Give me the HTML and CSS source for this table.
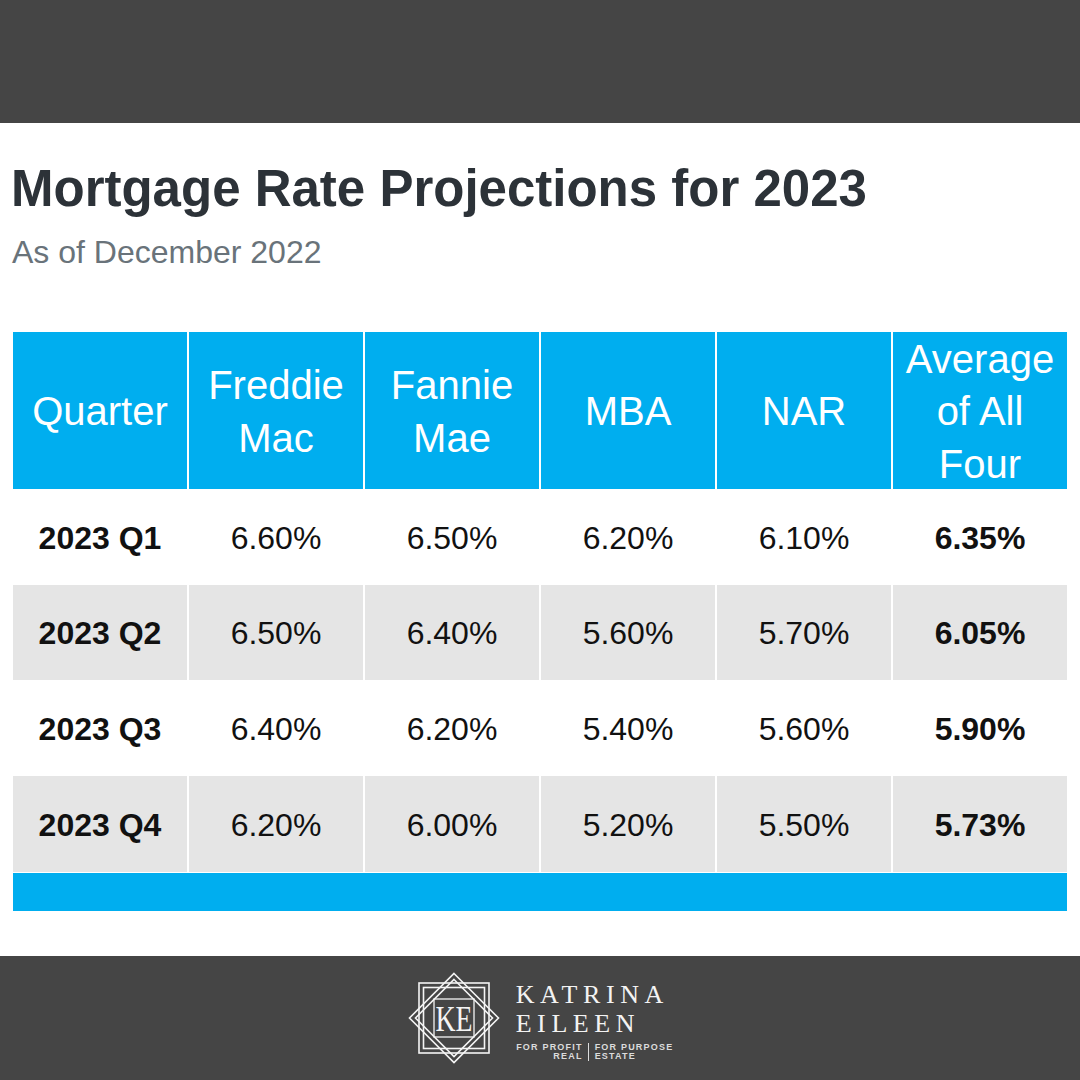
FILE: index.html
```html
<!DOCTYPE html>
<html lang="en">
<head>
<meta charset="utf-8">
<title>Mortgage Rate Projections for 2023</title>
<link rel="stylesheet" href="styles.css">
</head>
<body>
<div class="page">
  <header class="topbar"></header>
  <main class="content">
    <h1 class="title">Mortgage Rate Projections for 2023</h1>
    <p class="subtitle">As of December 2022</p>
    <div class="table">
      <div class="row head">
        <div class="cell">Quarter</div>
        <div class="cell">Freddie<br>Mac</div>
        <div class="cell">Fannie<br>Mae</div>
        <div class="cell">MBA</div>
        <div class="cell">NAR</div>
        <div class="cell">Average<br>of All<br>Four</div>
      </div>
      <div class="row data">
        <div class="cell strong">2023 Q1</div>
        <div class="cell">6.60%</div>
        <div class="cell">6.50%</div>
        <div class="cell">6.20%</div>
        <div class="cell">6.10%</div>
        <div class="cell strong">6.35%</div>
      </div>
      <div class="row data shaded short">
        <div class="cell strong">2023 Q2</div>
        <div class="cell">6.50%</div>
        <div class="cell">6.40%</div>
        <div class="cell">5.60%</div>
        <div class="cell">5.70%</div>
        <div class="cell strong">6.05%</div>
      </div>
      <div class="row data">
        <div class="cell strong">2023 Q3</div>
        <div class="cell">6.40%</div>
        <div class="cell">6.20%</div>
        <div class="cell">5.40%</div>
        <div class="cell">5.60%</div>
        <div class="cell strong">5.90%</div>
      </div>
      <div class="row data shaded">
        <div class="cell strong">2023 Q4</div>
        <div class="cell">6.20%</div>
        <div class="cell">6.00%</div>
        <div class="cell">5.20%</div>
        <div class="cell">5.50%</div>
        <div class="cell strong">5.73%</div>
      </div>
      <div class="table-foot"></div>
    </div>
  </main>
  <footer class="brandbar">
    <div class="brand">
      <svg class="emblem" width="92" height="92" viewBox="0 0 92 92" aria-hidden="true">
        <g fill="none" stroke="#f4f4f4" stroke-width="1.6">
          <polygon points="46,1.5 90.5,46 46,90.5 1.5,46"/>
          <polygon points="46,7.5 84.5,46 46,84.5 7.5,46"/>
          <rect x="11" y="11" width="70" height="70"/>
          <rect x="15.5" y="15.5" width="61" height="61"/>
          <rect x="26" y="27" width="40" height="38" stroke-width="1.3"/>
        </g>
        <text class="emblem-text" x="46" y="58.5" text-anchor="middle" textLength="37" lengthAdjust="spacingAndGlyphs">KE</text>
      </svg>
      <div class="wordmark">
        <div class="name">KATRINA</div>
        <div class="name">EILEEN</div>
        <div class="tagline">
          <div class="tag-left">FOR PROFIT<br>REAL</div>
          <div class="tag-divider"></div>
          <div class="tag-right">FOR PURPOSE<br>ESTATE</div>
        </div>
      </div>
    </div>
  </footer>
</div>
</body>
</html>
```

FILE: styles.css
```css
html, body {
  margin: 0;
  padding: 0;
  background: #ffffff;
}

.page {
  width: 1080px;
  height: 1080px;
  display: flex;
  flex-direction: column;
  font-family: "Liberation Sans", Arial, sans-serif;
}

.topbar {
  height: 123px;
  background: #454545;
  flex: none;
}

.content {
  flex: 1;
  padding: 36px 13px 0 13px;
}

.title {
  margin: 0 0 0 -2px;
  font-size: 51px;
  line-height: 60px;
  font-weight: 700;
  color: #2c3238;
}

.subtitle {
  margin: 14px 0 0 -1px;
  font-size: 32px;
  line-height: 38px;
  color: #69737a;
}

.table {
  margin-top: 61px;
  width: 1054px;
  display: flex;
  flex-direction: column;
}

.row {
  display: grid;
  grid-template-columns: repeat(6, 1fr);
  column-gap: 2px;
}

.cell {
  display: flex;
  align-items: center;
  justify-content: center;
  text-align: center;
}

.head .cell {
  background: #00aeef;
  color: #ffffff;
  font-size: 40px;
  line-height: 52.5px;
  height: 157px;
  padding-top: 2px;
  box-sizing: border-box;
}

.data .cell {
  height: 96px;
  font-size: 32px;
  color: #111111;
  padding-top: 2px;
  box-sizing: border-box;
}

.data.short .cell {
  height: 95px;
}

.data.shaded .cell {
  background: #e5e5e5;
}

.cell.strong {
  font-weight: 700;
}

.table-foot {
  margin-top: 1px;
  height: 38px;
  background: #00aeef;
}

.brandbar {
  height: 124px;
  flex: none;
  background: #454545;
  display: flex;
  align-items: center;
  justify-content: center;
}

.brand {
  display: flex;
  align-items: center;
  margin-left: 1px;
}

.emblem {
  display: block;
  flex: none;
}

.emblem-text {
  font-family: "Liberation Serif", "Times New Roman", serif;
  font-size: 35px;
  fill: #f4f4f4;
}

.wordmark {
  margin-left: 16px;
  padding-top: 5px;
  display: flex;
  flex-direction: column;
}

.name {
  font-family: "Liberation Serif", "Times New Roman", serif;
  font-size: 26px;
  line-height: 29px;
  letter-spacing: 5.6px;
  color: #f3f3f3;
}

.tagline {
  margin-top: 5px;
  display: flex;
  align-items: stretch;
  font-size: 9px;
  line-height: 9px;
  font-weight: 700;
  letter-spacing: 1.2px;
  color: #dcdcdc;
}

.tag-left {
  text-align: right;
  width: 67px;
}

.tag-divider {
  width: 1px;
  background: #dcdcdc;
  margin: 0 6px 0 5px;
}

.tag-right {
  text-align: left;
}
```
